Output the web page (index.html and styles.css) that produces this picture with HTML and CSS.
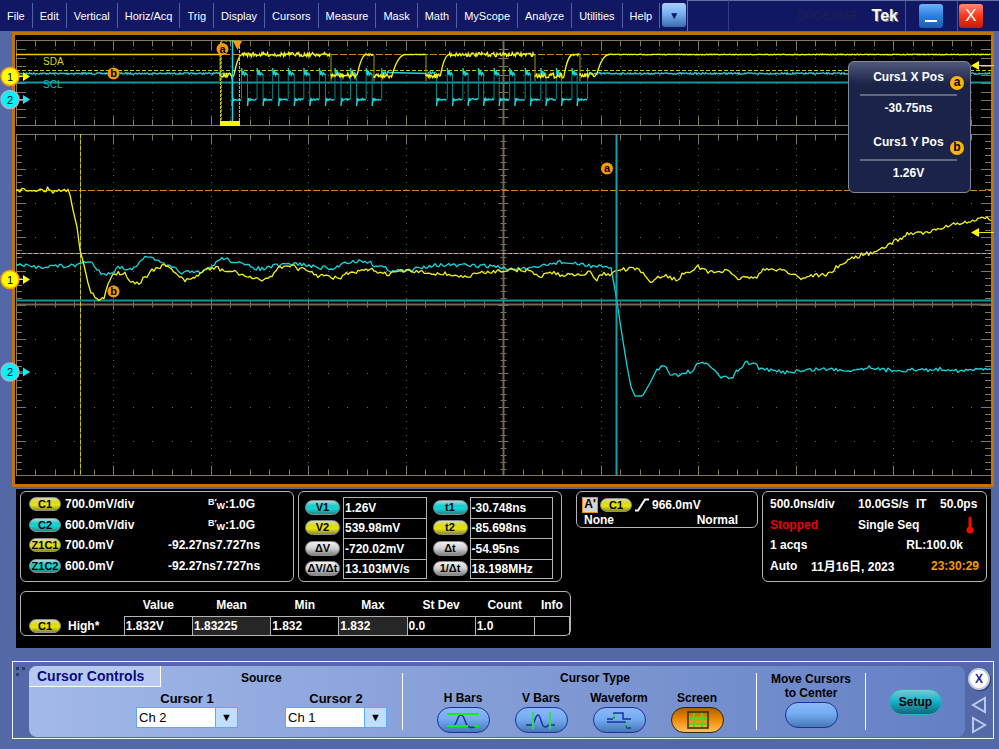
FILE: index.html
```html
<!DOCTYPE html>
<html lang="en">
<head>
    <meta charset="UTF-8">
    <meta name="viewport" content="width=device-width, initial-scale=1.0">
    <title>Tek DPO5204B</title>
    <link rel="stylesheet" href="styles.css">
</head>
<body>
    <header class="menubar">
        <nav class="menus">
            <button>File</button>
            <button>Edit</button>
            <button>Vertical</button>
            <button>Horiz/Acq</button>
            <button>Trig</button>
            <button>Display</button>
            <button>Cursors</button>
            <button>Measure</button>
            <button>Mask</button>
            <button>Math</button>
            <button>MyScope</button>
            <button>Analyze</button>
            <button>Utilities</button>
            <button>Help</button>
        </nav>
        <div class="more"><button class="more-btn" aria-label="More menus">▼</button></div>
        <div class="spacer"></div>
        <div class="brand"><span class="model">DPO5204B</span><span class="tek">Tek</span></div>
        <div class="win"><button class="min-btn" aria-label="Minimize"><svg width="24" height="24"><path d="M6 17h12" stroke="#fff" stroke-width="2"/></svg></button></div>
        <div class="win last"><button class="close-btn" aria-label="Close">X</button></div>
    </header>

    <main>
        <section class="scope">
            <svg id="screen" viewBox="15 35 976 449">
                <g id="grid"></g>
                <g id="cursors"></g>
                <g id="traces"></g>
                <g id="marks"></g>
            </svg>
            <div class="cursor-info">
                <div class="info-label">Curs1 X Pos <b class="dot">a</b></div>
                <div class="info-value">-30.75ns</div>
                <div class="info-label">Curs1 Y Pos <b class="dot">b</b></div>
                <div class="info-value">1.26V</div>
            </div>
        </section>

        <section class="readouts">
            <div class="readout-row">
                <div class="box channels">
                    <div class="line"><span class="badge yellow">C1</span><span class="scale">700.0mV/div</span><span class="bw"><span>B</span><i>′</i><sub>W</sub></span>:1.0G</div>
                    <div class="line"><span class="badge cyan">C2</span><span class="scale">600.0mV/div</span><span class="bw"><span>B</span><i>′</i><sub>W</sub></span>:1.0G</div>
                    <div class="line"><span class="badge yellow">Z1C1</span><span class="scale zoomed">700.0mV</span><span>-92.27ns</span><span>7.727ns</span></div>
                    <div class="line"><span class="badge cyan">Z1C2</span><span class="scale zoomed">600.0mV</span><span>-92.27ns</span><span>7.727ns</span></div>
                </div>

                <div class="box cursor-values">
                    <span class="badge cyan">V1</span><span class="val">1.26V</span>
                    <span class="badge cyan">t1</span><span class="val">-30.748ns</span>
                    <span class="badge yellow">V2</span><span class="val">539.98mV</span>
                    <span class="badge yellow">t2</span><span class="val">-85.698ns</span>
                    <span class="badge gray">ΔV</span><span class="val">-720.02mV</span>
                    <span class="badge gray">Δt</span><span class="val">-54.95ns</span>
                    <span class="badge gray">ΔV/Δt</span><span class="val">13.103MV/s</span>
                    <span class="badge gray">1/Δt</span><span class="val">18.198MHz</span>
                </div>

                <div class="box trigger">
                    <div class="trig-top">
                        <span class="trig-a">A'</span>
                        <span class="badge yellow">C1</span>
                        <svg width="16" height="14"><path d="M1 12.5h3l7-11h4" fill="none" stroke="#fff" stroke-width="2"/></svg>
                        <span>966.0mV</span>
                    </div>
                    <div class="trig-bottom"><span>None</span><span>Normal</span></div>
                </div>

                <div class="box acq">
                    <div class="line"><span class="c1">500.0ns/div</span><span class="rate">10.0GS/s</span><span class="it">IT</span><span>50.0ps</span></div>
                    <div class="line"><span class="c1 stopped">Stopped</span><span>Single Seq</span>
                        <svg class="therm" width="8" height="18"><path d="M4 2v11" stroke="#f20d00" stroke-width="3" stroke-linecap="round"/><circle cx="4" cy="14" r="3.5" fill="#f20d00"/></svg>
                    </div>
                    <div class="line"><span>1 acqs</span><span class="rl">RL:100.0k</span></div>
                    <div class="line"><span class="auto">Auto</span><span>11月16日, 2023</span><span class="time">23:30:29</span></div>
                </div>
            </div>

            <div class="box stats">
                <table>
                    <colgroup><col class="w-name"><col class="w-a"><col class="w-b"><col class="w-a"><col class="w-a"><col class="w-a"><col class="w-c"><col class="w-d"></colgroup>
                    <thead>
                        <tr><th></th><th>Value</th><th>Mean</th><th>Min</th><th>Max</th><th>St Dev</th><th>Count</th><th>Info</th></tr>
                    </thead>
                    <tbody>
                        <tr>
                            <th scope="row"><span class="badge yellow">C1</span>High*</th>
                            <td>1.832V</td><td class="alt">1.83225</td><td>1.832</td><td class="alt">1.832</td><td>0.0</td><td>1.0</td><td></td>
                        </tr>
                    </tbody>
                </table>
            </div>
        </section>
    </main>

    <section class="dock">
        <svg class="grip" width="12" height="12" fill="#2c3a66"><path d="M1 1h3v3H1zM7 1h3v3H7zM1 7h3v3H1z"/></svg>
        <div class="controls">
            <div class="source">
                <div class="source-head"><h2>Cursor Controls</h2><h3>Source</h3></div>
                <div class="fields">
                    <div class="field">
                        <label for="cursor1">Cursor 1</label>
                        <div class="select"><select id="cursor1"><option>Ch 1</option><option selected>Ch 2</option></select></div>
                    </div>
                    <div class="field">
                        <label for="cursor2">Cursor 2</label>
                        <div class="select"><select id="cursor2"><option selected>Ch 1</option><option>Ch 2</option></select></div>
                    </div>
                </div>
            </div>
            <div class="types">
                <h3>Cursor Type</h3>
                <div class="type-list">
                    <div class="type">
                        <label for="hbars">H Bars</label>
                        <button class="pill" id="hbars">
                            <svg width="34" height="20" fill="none"><path d="M1 16h6c4 0 4-11 8-11s4 11 8 12c3 1 5 1 7-1" stroke="#1d2f9e" stroke-width="1.5"/><path d="M1 4h32M1 16h21M28 16h5" stroke="#0df01f" stroke-width="2"/></svg>
                        </button>
                    </div>
                    <div class="type">
                        <label for="vbars">V Bars</label>
                        <button class="pill" id="vbars">
                            <svg width="34" height="20" fill="none"><path d="M2 15h5c4 0 4-10 7-10s3 12 7 12c3 0 2-2 5-2h5" stroke="#1d2f9e" stroke-width="1.5"/><path d="M9 2v17M26 2v17" stroke="#2dde55" stroke-width="2"/></svg>
                        </button>
                    </div>
                    <div class="type">
                        <label for="wave">Waveform</label>
                        <button class="pill" id="wave">
                            <svg width="34" height="20" fill="none"><path d="M5 9h7V3h9v6h8M5 12h18l2 6h4" stroke="#1d2f9e" stroke-width="1.5"/><path d="M12 4v6M23 13l3 4" stroke="#2dde55" stroke-width="2" stroke-dasharray="3 1"/></svg>
                        </button>
                    </div>
                    <div class="type">
                        <label for="scr">Screen</label>
                        <button class="pill selected" id="scr">
                            <svg width="34" height="20" fill="none"><path d="M14 2v17M22 2v17M8 8h20M8 14h20" stroke="#52d818" stroke-width="2"/><path d="M8 2h20v16H8z" stroke="#3a2a08" stroke-width="1.5"/></svg>
                        </button>
                    </div>
                </div>
            </div>
            <div class="move">
                <label for="center">Move Cursors<br>to Center</label>
                <button class="pill" id="center"></button>
            </div>
            <div class="setup"><button class="pill teal">Setup</button></div>
        </div>
        <div class="side">
            <button class="dock-close" aria-label="Close panel">X</button>
            <button class="tri" aria-label="Previous"><svg width="18" height="20" fill="none"><path d="M15 3v14L3 10z" stroke="#b9c8ee" stroke-width="2"/></svg></button>
            <button class="tri" aria-label="Next"><svg width="18" height="20" fill="none"><path d="M3 3v14l12-7z" stroke="#b9c8ee" stroke-width="2"/></svg></button>
        </div>
    </section>

    <script src="script.js"></script>
</body>
</html>
```
FILE: styles.css
```css
* {
    box-sizing: border-box;
    margin: 0;
    padding: 0;
}

body {
    background-color: #5468a8;
    font-family: "Liberation Sans", Arial, "Noto Sans CJK JP", sans-serif;
    font-size: 12px;
    color: #fff;
}

button {
    border: none;
    background: none;
    font-family: inherit;
    cursor: pointer;
}

svg {
    display: block;
}

/* menu bar */
.menubar {
    display: flex;
    height: 31px;
    background-color: #111763;
}

.menus {
    display: flex;
    align-items: center;
}

.menus button {
    height: 25px;
    padding: 0 7px;
    border-right: 1px solid #4c62a4;
    color: #fff;
    font-size: 11px;
    white-space: nowrap;
}

.more {
    padding: 3px 1px 0 2px;
    border-right: 1px solid #6470a4;
}

.more-btn {
    width: 24px;
    height: 24px;
    border-radius: 3px;
    background: linear-gradient(#a8d0ff, #78b0f0 45%, #3c6cae);
    color: #0a1470;
    font-size: 10px;
}

.spacer {
    width: 41px;
    border-top: 1px solid #6470a4;
    border-right: 1px solid #343c80;
}

.brand {
    flex: 1;
    display: flex;
    align-items: center;
    justify-content: flex-end;
    gap: 14px;
    padding-right: 7px;
    border-top: 1px solid #6470a4;
    border-right: 1px solid #4a5290;
}

.model {
    color: #1a2058;
}

.tek {
    font-size: 16px;
    font-weight: bold;
    text-shadow: 1px 1px 0 #777;
}

.win {
    width: 52px;
    padding: 3px 0 0 13px;
    border-top: 1px solid #6470a4;
    border-right: 1px solid #4a5290;
}

.win.last {
    width: 41px;
    padding-left: 1px;
    border-right: none;
}

.min-btn,
.close-btn {
    width: 24px;
    height: 24px;
    border-radius: 3px;
    color: #fff;
    font-size: 17px;
}

.min-btn {
    background: linear-gradient(#6cb2f8, #2c7fe0 50%, #1c5cae);
}

.close-btn {
    background: linear-gradient(#ff8878, #f8381c 50%, #c01c08);
}

/* screen */
.scope {
    position: relative;
    margin: 1px 5px 0 12px;
    border: 3px solid #c07408;
    background-color: #000;
}

#screen {
    width: 100%;
    height: auto;
    overflow: visible;
}

.cursor-info {
    position: absolute;
    top: 26px;
    right: 20px;
    width: 123px;
    height: 132px;
    padding: 6px 13px 6px 11px;
    border: 1px solid #85889a;
    border-radius: 6px;
    background: linear-gradient(#50587c, #1b2448 22px, #1b2448);
    font-weight: bold;
    text-align: center;
}

.info-label {
    position: relative;
    height: 28px;
    line-height: 18px;
    border-bottom: 2px solid #62697f;
}

.info-value {
    height: 37px;
    line-height: 25px;
}

.dot {
    position: absolute;
    top: 8px;
    right: -7px;
    width: 14px;
    height: 14px;
    border-radius: 50%;
    background-color: #ffb400;
    color: #000;
    line-height: 13px;
}

/* readouts */
.readouts {
    margin: 2px 8px 0 16px;
    padding: 2px 4px 12px;
    background-color: #000;
    font-weight: bold;
}

.readout-row {
    display: grid;
    grid-template-columns: 274fr 264fr 192fr 225fr;
    gap: 4px;
    align-items: start;
}

.box {
    border: 1px solid #b4b4b4;
    border-radius: 6px;
    white-space: nowrap;
}

.badge {
    display: inline-block;
    width: 32px;
    height: 14px;
    border: 1px solid #8c8c8c;
    border-radius: 7px;
    color: #000;
    font-size: 11px;
    line-height: 12px;
    text-align: center;
}

.yellow {
    background: linear-gradient(#d8d8b8, #dcdc10 35%, #e4e410 60%, #8c8c20);
}

.cyan {
    background: linear-gradient(#b8d8d8, #14cfd0 35%, #14d4d4 60%, #208888);
}

.gray {
    background: linear-gradient(#f0f0f0, #cfcfcf 50%, #808080);
}

.channels,
.acq {
    display: grid;
    grid-auto-rows: 1fr;
    height: 91px;
    padding: 2px 7px 5px;
}

.channels {
    padding-left: 8px;
}

.line {
    display: flex;
    align-items: center;
}

.scale {
    width: 143px;
    margin-left: 4px;
}

.scale.zoomed {
    width: 103px;
}

.bw {
    display: flex;
    font-size: 9px;
    line-height: 10px;
}

.bw i {
    width: 2px;
    font-style: normal;
}

.bw sub {
    padding-top: 4px;
    font-size: 9px;
    vertical-align: baseline;
}

.cursor-values {
    display: grid;
    grid-template-columns: 38px 1fr 43px 1fr;
    grid-auto-rows: 1fr;
    height: 91px;
    padding: 5px 8px 2px 6px;
}

.cursor-values .badge {
    width: 35px;
    height: 15px;
    border-radius: 8px;
    line-height: 13px;
    align-self: center;
    justify-self: start;
}

.cursor-values .badge:nth-child(4n + 3) {
    margin-left: 6px;
}

.val {
    display: flex;
    align-items: center;
    padding-left: 1px;
    border: 1px solid #b4b4b4;
    border-bottom: none;
}

.val:nth-last-child(-n + 3) {
    border-bottom: 1px solid #b4b4b4;
}

.trigger {
    height: 37px;
    margin-left: 10px;
    padding: 5px 5px 0;
}

.trig-top {
    display: flex;
    align-items: center;
    gap: 2px;
}

.trig-a {
    width: 16px;
    height: 16px;
    border: 1px solid #f08c1c;
    background-color: #d4d4d4;
    color: #000;
    line-height: 13px;
    text-align: center;
}

.trig-bottom {
    display: flex;
    justify-content: space-between;
    padding: 1px 14px 0 2px;
    line-height: 13px;
}

.c1 {
    width: 88px;
}

.rate {
    width: 58px;
}

.it {
    width: 24px;
}

.stopped {
    color: #f00000;
}

.therm {
    margin-left: auto;
    margin-right: 5px;
}

.rl {
    margin-left: auto;
    margin-right: 16px;
}

.auto {
    width: 41px;
}

.time {
    margin-left: auto;
    color: #f59a00;
}

.stats {
    width: 57%;
    margin-top: 9px;
}

.stats table {
    width: 549px;
    table-layout: fixed;
    border-collapse: collapse;
}

.w-name { width: 103px; }
.w-a { width: 68px; }
.w-b { width: 78px; }
.w-c { width: 59px; }
.w-d { width: 35px; }

.stats thead th {
    height: 24px;
    padding-top: 2px;
}

.stats tbody th {
    padding-left: 8px;
    text-align: left;
}

.stats .badge {
    margin-right: 7px;
}

.stats td {
    height: 19px;
    padding-left: 1px;
    border: 1px solid #b4b4b4;
    border-bottom: none;
}

.stats .alt {
    background-color: #262626;
}

/* cursor controls */
.dock {
    display: flex;
    margin: 13px 5px 10px 12px;
    height: 78px;
    padding: 4px 0 1px;
    border: 1px solid #f0f4ff;
    color: #000;
    font-weight: bold;
}

.grip {
    margin-left: 2px;
}

.controls {
    flex: 1;
    display: grid;
    grid-template-columns: 373fr 354fr 110fr 99fr;
    margin-left: 2px;
    border-radius: 8px;
    background: linear-gradient(90deg, #a2b9e9, #6480c4);
}

.controls h3 {
    font-size: 12px;
    line-height: 24px;
}

.source-head {
    display: flex;
    height: 24px;
}

.source-head h2 {
    width: 132px;
    height: 21px;
    margin-right: 80px;
    padding-left: 8px;
    border-right: 1px solid #fff;
    border-bottom: 1px solid #fff;
    border-top-left-radius: 8px;
    background-color: #b7c9ee;
    color: #0a0a80;
    font-size: 14px;
    line-height: 21px;
}

.fields {
    display: flex;
    gap: 47px;
    padding-left: 107px;
}

.field label {
    display: block;
    font-size: 13px;
    line-height: 17px;
    text-align: center;
}

.select {
    position: relative;
}

.select::after {
    content: "▼";
    position: absolute;
    top: 1px;
    right: 1px;
    width: 21px;
    height: 19px;
    border-left: 1px solid #5ca8ff;
    background-color: #c0deff;
    font-size: 11px;
    line-height: 18px;
    text-align: center;
    pointer-events: none;
}

select {
    display: block;
    appearance: none;
    width: 102px;
    height: 21px;
    padding-left: 2px;
    border: 1px solid #5ca8ff;
    border-radius: 0;
    background-color: #fff;
    color: #000;
    font: 13px "Liberation Sans", Arial, sans-serif;
}

.types,
.move {
    position: relative;
}

/* section dividers */
.types::before,
.move::before,
.move::after {
    content: "";
    position: absolute;
    top: 7px;
    bottom: 7px;
    left: 0;
    width: 1px;
    background-color: #fff;
}

.move::after {
    left: auto;
    right: 0;
}

.types h3 {
    padding-left: 32px;
    text-align: center;
}

.type-list {
    display: flex;
    justify-content: center;
    padding-left: 2px;
}

.type {
    width: 78px;
    text-align: center;
}

.type label {
    display: block;
    line-height: 17px;
}

.pill {
    display: inline-flex;
    align-items: center;
    justify-content: center;
    width: 53px;
    height: 26px;
    border: 1px solid #1f309c;
    border-radius: 13px;
    background: linear-gradient(#8cb8f4, #74acf4 45%, #4678b4);
}

.pill.selected {
    border-color: #33250a;
    background: linear-gradient(#a86004, #ec8800 45%, #ffc060);
}

.pill.teal {
    border-color: #2ab0c0;
    background: linear-gradient(#7cc8d4, #18b4cc 45%, #106878);
    color: #000;
    font-size: 12px;
    font-weight: bold;
}

.move {
    padding-top: 6px;
    line-height: 14px;
    text-align: center;
}

.move label {
    display: block;
    margin-bottom: 2px;
}

.setup {
    display: flex;
    align-items: center;
    justify-content: center;
}

.side {
    display: flex;
    flex-direction: column;
    align-items: center;
    width: 28px;
}

.dock-close {
    width: 22px;
    height: 22px;
    margin: 2px 0 5px;
    border: 2px solid #c4cce0;
    border-radius: 50%;
    background-color: #fff;
    box-shadow: 1px 1px 1px #2c3a66;
    color: #1c2c90;
    font-size: 12px;
    font-weight: bold;
    line-height: 18px;
}
```
FILE: script.js
```javascript
const NS = 'http://www.w3.org/2000/svg';
const grid = document.querySelector('#grid');
const cursors = document.querySelector('#cursors');
const traces = document.querySelector('#traces');
const marks = document.querySelector('#marks');

const YELLOW = '#f2f218';
const CYAN = '#14d8dc';

function add(parent, name, attrs, text) {
    const el = document.createElementNS(NS, name);
    for (const key in attrs) {
        el.setAttribute(key, attrs[key]);
    }
    if (text) {
        el.textContent = text;
    }
    parent.appendChild(el);
    return el;
}

function path(parent, d, color, width, dash) {
    const attrs = { d: d, fill: 'none', stroke: color, 'stroke-width': width || 1 };
    if (dash) {
        attrs['stroke-dasharray'] = dash;
    }
    return add(parent, 'path', attrs);
}

// fixed seed, the traces look the same on every load
let seed = 7;
function rand() {
    seed = (seed * 16807) % 2147483647;
    return seed / 2147483647 - 0.5;
}

// graticules
const LEFT = 16, RIGHT = 991, MID = 503.5, STEP = 19.5;

function graticule(top, bottom, rowStep, rows, majorEvery) {
    let ticks = `M${LEFT} ${top}H${RIGHT}M${LEFT} ${bottom}H${RIGHT}M${LEFT + 0.5} ${top}V${bottom}`;
    let dots = '';
    for (let i = 1; i < 50; i++) {
        const x = Math.floor(LEFT + i * STEP) + 0.5;
        const len = i % 5 === 0 ? 10 : 6;
        ticks += `M${x} ${top}v${len}M${x} ${bottom}v${-len}`;
        for (let j = 1; j < rows; j++) {
            if (i % 5 === 0 || j % majorEvery === 0) {
                dots += `M${x - 0.5} ${Math.round(top + j * rowStep) + 0.5}h1`;
            }
        }
    }
    for (let j = 1; j < rows; j++) {
        const y = Math.round(top + j * rowStep) + 0.5;
        const len = rows === 10 || j % 5 === 0 ? 10 : 6;
        ticks += `M${LEFT} ${y}h${len}M${RIGHT} ${y}h${-len}M${MID - len / 2} ${y}h${len}`;
    }
    path(grid, dots, '#6e6653');
    path(grid, ticks, '#81775f');
    path(grid, `M${MID} ${top}V${bottom}`, '#6f6757', 2);
}

graticule(40.5, 125.5, 8.5, 10, 1);
graticule(134.5, 475.5, 6.82, 50, 5);

let axis = '';
for (let i = 1; i < 50; i++) {
    const h = i % 5 === 0 ? 5 : 3;
    axis += `M${Math.floor(LEFT + i * STEP) + 0.5} ${304.5 - h}v${h * 2}`;
}
path(grid, axis, '#81775f');
path(grid, `M${LEFT} 304.5H${RIGHT}`, '#6f6757', 2);

// cursor lines
path(cursors, 'M16 54.5H991M16 190.5H991', '#d08a10', 1, '7 2');
path(cursors, 'M16 253.5H991M80.5 134V475', '#6c6c0c');
path(cursors, 'M16 70.5H991M16 253.5H991M80.5 134V475', '#c8c814', 1, '4 2');
path(cursors, 'M16 82.5H991M16 300.5H991', '#10959c', 2);

// overview traces
function noisy(x0, x1, y, amp) {
    let d = '';
    for (let x = x0; x < x1; x += 0.8) {
        d += `L${x.toFixed(1)} ${(y + rand() * amp).toFixed(1)}`;
    }
    return d;
}

function clock(firstFall, nextFall, firstRise) {
    const P = 15.58;
    let fall = firstFall;
    let flat = '', edges = '';
    for (let i = 0; i < 10; i++) {
        const rise = firstRise + i * P;
        edges += `M${fall} 74V105M${rise} 99V70`;
        flat += `M${fall} 106L${fall + 1} 98L${fall + 2} 101` + noisy(fall + 2, rise, 99.5, 1.5);
        fall = nextFall + i * P;
        if (i < 9) {
            flat += `M${rise} 68L${rise + 1} 75L${rise + 2} 71L${rise + 3} 75L${rise + 4} 73L${fall} 75`;
        }
    }
    path(traces, edges, '#0d8488');
    path(traces, flat, CYAN, 1.4);
    path(traces, `M${firstRise + 9 * P} 68v8`, CYAN);
}

path(traces, 'M16 73.5' + noisy(16, 232, 73.5, 1.6), CYAN, 1.3);
clock(232, 247.5, 241.5);
path(traces, 'M382 73.5' + noisy(382, 390, 73.5, 4) + 'L426 73.5' + noisy(426, 436, 73.5, 4), CYAN, 1.3);
clock(436.5, 452.5, 447.3);
path(traces, 'M588 73.5' + noisy(588, 600, 73.5, 2) + noisy(600, 991, 73.5, 1.6), CYAN, 1.3);

// [start of low, start of rise, end of rise, end of high, noise on high]
const pulses = [
    [220, 235, 242, 330.5, 4],
    [331, 358, 366, 374, 2],
    [374, 393, 405, 426, 0.5],
    [426, 441, 449, 535, 4],
    [535, 564, 573, 580, 2],
    [580, 597, 609, 991, 0.8]
];
path(traces, 'M16 54.5H220', '#f5c80c', 1.4);
pulses.forEach(function (p) {
    path(traces, `M${p[0]} 55V81`, '#a09a14');
    const w = p[2] - p[1];
    const d = `M${p[0]} 75.5` + noisy(p[0], p[1], 75.5, 5)
        + `C${p[1] + w * 0.3} 60 ${p[1] + w * 0.6} 55 ${p[2]} 54.5` + noisy(p[2], p[3], 54.5, p[4]);
    path(traces, d, YELLOW, 1.3);
});

// zoomed traces
function trace(points, color, amp) {
    let d = `M${points[0][0]} ${points[0][1]}`;
    for (let i = 1; i < points.length; i++) {
        const [x0, y0] = points[i - 1];
        const [x1, y1] = points[i];
        const steep = Math.abs(y1 - y0) > (x1 - x0) * 1.2;
        const n = Math.max(1, Math.round((x1 - x0) / 2));
        for (let k = 1; k <= n; k++) {
            const t = k / n;
            const s = t * t * (3 - 2 * t);
            const y = steep ? y0 + (y1 - y0) * t : y0 + (y1 - y0) * s + rand() * amp;
            d += `L${(x0 + (x1 - x0) * t).toFixed(1)} ${y.toFixed(1)}`;
        }
    }
    path(traces, d, color, 1.3).setAttribute('stroke-linejoin', 'round');
}

trace([[16, 265], [36, 267], [50, 266], [75, 266], [82, 262], [92, 263], [97, 270], [103, 274], [112, 272],
    [120, 267], [130, 270], [136, 265], [143, 258], [153, 258], [162, 264], [172, 268], [182, 272], [200, 273],
    [212, 266], [222, 258], [233, 261], [247, 266], [262, 269], [275, 266], [290, 264], [300, 264], [315, 267],
    [333, 269], [345, 262], [365, 261], [378, 266], [395, 271], [410, 271], [420, 267], [435, 265], [490, 266],
    [510, 269], [530, 269], [550, 264], [560, 262], [575, 264], [595, 266], [611, 269], [614, 284], [617, 302],
    [622, 335], [627, 366], [631, 387], [635, 396], [643, 395], [650, 383], [657, 369], [664, 366], [670, 373],
    [678, 375], [692, 371], [699, 364], [706, 363], [714, 369], [721, 378], [731, 378], [738, 371], [745, 363],
    [753, 363], [763, 370], [785, 372], [800, 371], [820, 369], [850, 370], [873, 367], [880, 370], [920, 370],
    [950, 369], [962, 371], [991, 368]], CYAN, 4);

trace([[16, 190], [46, 190], [49, 188], [53, 193], [57, 190], [68, 190], [70, 195], [73, 210], [77, 227],
    [80, 250], [84, 265], [88, 283], [91, 293], [97, 299], [104, 297], [108, 284], [113, 274], [120, 273],
    [125, 274], [128, 279], [133, 282], [139, 284], [145, 277], [152, 270], [160, 267], [166, 266], [172, 269],
    [178, 276], [185, 281], [193, 279], [200, 273], [208, 269], [216, 268], [224, 271], [235, 272], [243, 275],
    [250, 278], [258, 280], [270, 277], [280, 267], [290, 265], [300, 269], [310, 272], [320, 276], [339, 278],
    [350, 273], [372, 270], [385, 274], [405, 271], [430, 273], [445, 274], [465, 277], [480, 273], [505, 270],
    [525, 270], [540, 276], [550, 272], [560, 275], [590, 273], [597, 279], [602, 274], [612, 274], [618, 270],
    [635, 269], [643, 273], [650, 282], [658, 277], [666, 276], [678, 280], [684, 273], [698, 267], [708, 272],
    [725, 271], [738, 278], [755, 277], [765, 270], [780, 269], [792, 274], [801, 278], [815, 275], [826, 275],
    [838, 267], [852, 258], [865, 254], [878, 252], [884, 247], [900, 239], [909, 233], [925, 233], [938, 230],
    [948, 225], [965, 223], [978, 220], [987, 217], [991, 220]], YELLOW, 4);

// vertical cursors and the zoom window
path(marks, 'M616.5 134V475', '#0fa4aa', 2);
path(marks, 'M232.5 40V125', CYAN, 1.5);
path(marks, 'M220.5 121V41H239.5V121', '#c8c814', 1, '3 1');
path(marks, 'M221.5 41V121', '#8c8c10', 1, '3 1');
add(marks, 'rect', { x: 220, y: 121, width: 20, height: 5, fill: '#f6f600' });

add(marks, 'text', { x: 43, y: 65, fill: '#d8d818', 'font-size': 10 }, 'SDA');
add(marks, 'text', { x: 43, y: 88, fill: '#14c0c4', 'font-size': 10 }, 'SCL');

[[222.5, 49, 'a'], [113.5, 73.5, 'b'], [113.5, 291.5, 'b'], [607, 168.5, 'a']].forEach(function (b) {
    add(marks, 'circle', { cx: b[0], cy: b[1], r: 6, fill: '#f59a0c' });
    add(marks, 'text', { x: b[0], y: b[1] + 3.5, 'text-anchor': 'middle', 'font-size': 11, 'font-weight': 'bold' }, b[2]);
});
add(marks, 'path', { d: 'M233 41h9l-4.5 9z', fill: '#ff9a10' });

function channel(y, name, color, ring) {
    add(marks, 'circle', { cx: 10, cy: y, r: 9, fill: color, stroke: ring, 'stroke-width': 1.5 });
    add(marks, 'text', { x: 10, y: y + 4, 'text-anchor': 'middle', 'font-size': 11 }, name);
    add(marks, 'path', { d: `M19 ${y - 0.5}h4v-4l7 4.5l-7 4.5v-4h-4z`, fill: color });
}
channel(76.5, '1', '#ffff00', '#ff9a10');
channel(99.5, '2', '#00f4fa', '#a8b4c0');
channel(279.5, '1', '#ffff00', '#ff9a10');
channel(372, '2', '#00f4fa', '#a8b4c0');

[65.5, 232.5].forEach(function (y) {
    add(marks, 'path', { d: `M971 ${y}l8-4.5v9z`, fill: '#ffff00' });
    path(marks, `M979 ${y}H994`, '#e8e800');
});
```
